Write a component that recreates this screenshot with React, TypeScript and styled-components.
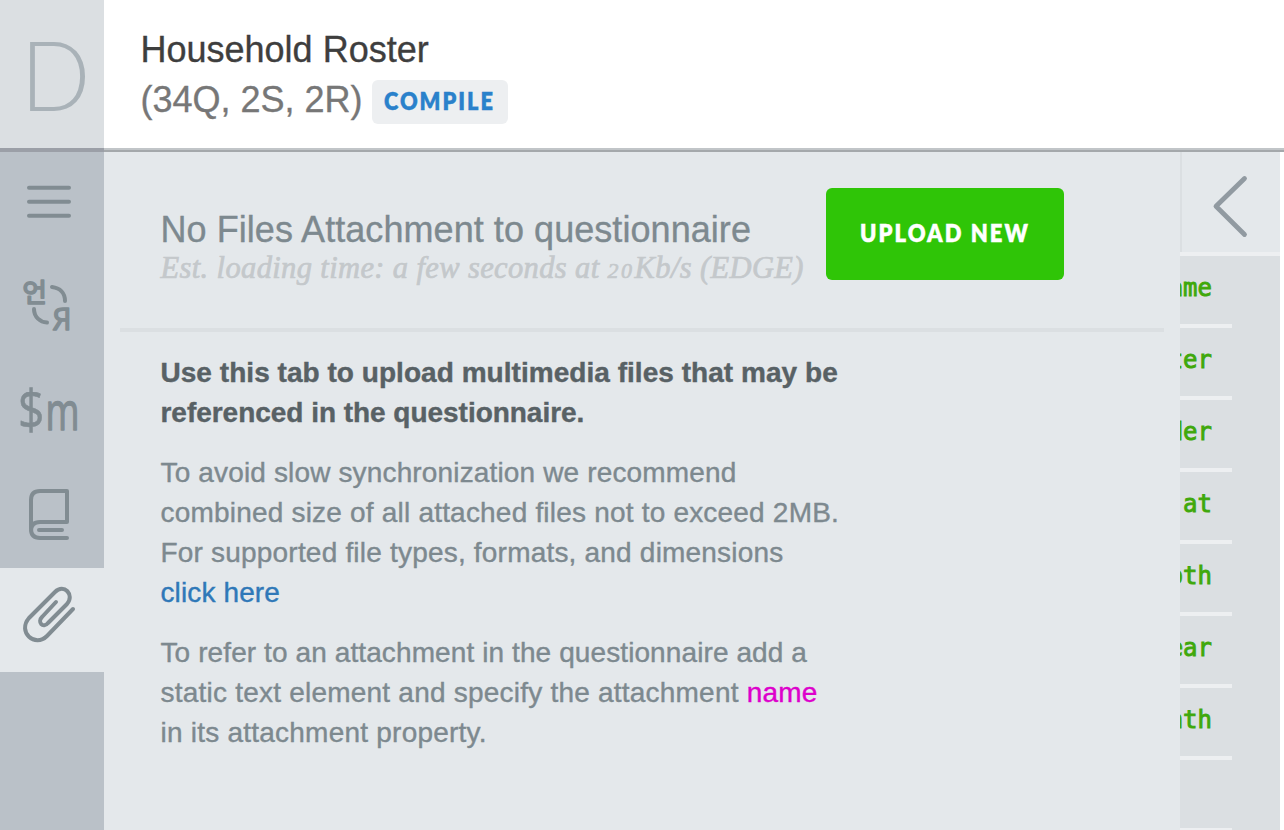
import React from "react";
import styled, { createGlobalStyle } from "styled-components";

const GlobalStyle = createGlobalStyle`
  * { box-sizing: border-box; }
  body {
    margin: 0;
    background: #fff;
    font-family: "Liberation Sans", Arial, sans-serif;
    overflow: hidden;
  }
`;

const Page = styled.div`
  display: flex;
  width: 1284px;
  height: 830px;
  overflow: hidden;
`;

const Sidebar = styled.nav`
  display: flex;
  flex-direction: column;
  width: 104px;
  background: #bac1c8;
`;

const Logo = styled.div`
  height: 152px;
  background: #dbdfe2;
  border-bottom: 4px solid #9b9fa7;
  svg { display: block; }
`;

const Tab = styled.button<{ $active?: boolean }>`
  display: block;
  width: 104px;
  height: 104px;
  padding: 0;
  border: 0;
  background: ${(p) => (p.$active ? "#e4e8eb" : "transparent")};
  svg { display: block; }
`;

const Icon = styled.svg`
  fill: none;
  stroke: #818c92;
  stroke-width: 4;
  stroke-linecap: round;
  stroke-linejoin: round;
  text { fill: #818c92; }
`;

const Main = styled.div`
  display: flex;
  flex-direction: column;
  flex: 1;
`;

const Header = styled.header`
  flex: none;
  height: 152px;
  padding: 25px 36px 0 36.5px;
  background: #fff;
  border-bottom: 2px solid #a4a8ab;
  box-shadow: inset 0 -2px #c1c5c8;
  font-size: 36px;
  line-height: 50px;
  color: #3e3e3e;
  -webkit-text-stroke: 0.35px;
`;

const TitleRow = styled.div`
  display: flex;
  align-items: center;
  gap: 9.5px;
  color: #777;
`;

const Caps = styled.span<{ $stretch: number }>`
  display: inline-block;
  font-family: Lato, sans-serif;
  font-weight: 800;
  font-size: 25px;
  line-height: 30px;
  letter-spacing: 2.3px;
  white-space: nowrap;
  transform: scaleX(${(p) => p.$stretch});
  transform-origin: left;
`;

const Compile = styled.button`
  width: 136px;
  height: 44px;
  margin-top: 3px;
  padding: 0 0 3px 12px;
  border: 0;
  border-radius: 6px;
  background: #edeff1;
  color: #2a81cb;
  text-align: left;
  line-height: 0;
  -webkit-text-stroke: 0.4px;
`;

const Body = styled.div`
  display: flex;
  flex: 1;
  min-height: 0;
`;

const Content = styled.main`
  width: 1076px;
  padding: 0 16px;
  background: #e4e8eb;
`;

const Intro = styled.section`
  display: flex;
  gap: 20px;
  height: 180px;
  padding: 36px 0 0 40px;
  border-bottom: 4px solid #dbdfe2;
`;

const IntroText = styled.div`
  width: 646px;
  padding: 22px 0 0 0.5px;
  white-space: nowrap;
`;

const Heading = styled.h1`
  margin: 0;
  font-size: 36px;
  line-height: 40px;
  font-weight: 400;
  letter-spacing: 0.06px;
  color: #7d898f;
  -webkit-text-stroke: 0.35px;
`;

const Estimate = styled.p`
  margin: 0;
  font-family: "Liberation Serif", Georgia, serif;
  font-style: italic;
  font-size: 30.5px;
  line-height: 36px;
  letter-spacing: 0.37px;
  color: #c4c8cb;
  -webkit-text-stroke: 0.7px;
`;

const SmallDigits = styled.span`
  font-size: 22px;
  letter-spacing: 2.5px;
`;

const Upload = styled.button`
  width: 238px;
  height: 92px;
  padding: 0 0 4px 34px;
  border: 0;
  border-radius: 6px;
  background: #2fc507;
  color: #fff;
  text-align: left;
  -webkit-text-stroke: 0.4px;
`;

const Help = styled.section`
  padding: 20.5px 0 0 40.5px;
  font-size: 28px;
  line-height: 40px;
  color: #7d898f;
  white-space: nowrap;
  -webkit-text-stroke: 0.4px;
`;

const Paragraph = styled.p<{ $strong?: boolean }>`
  margin: 0 0 20px;
  font-weight: ${(p) => (p.$strong ? 700 : 400)};
  color: ${(p) => (p.$strong ? "#586165" : "inherit")};
`;

const Line = styled.span<{ $track?: number }>`
  display: block;
  letter-spacing: ${(p) => p.$track ?? 0}px;
`;

const Link = styled.a`
  color: #2f78b8;
`;

const Name = styled.span`
  color: #dd00cb;
`;

const Variables = styled.aside`
  width: 100px;
  background: #dbdfe2;
  overflow: hidden;
`;

const Collapse = styled.button`
  display: block;
  width: 100px;
  height: 104px;
  padding: 0;
  border: 0;
  border-bottom: 4px solid #edeff1;
  background: #e4e8eb;
  box-shadow: inset 2px 0 #dbdfe2;
  svg { display: block; }
`;

const Variable = styled.div`
  display: flex;
  justify-content: flex-end;
  width: 52px;
  height: 72px;
  padding: 14px 20px 0 0;
  border-bottom: 4px solid #edeff1;
  overflow: hidden;
  font-family: "DejaVu Sans Mono", monospace;
  font-size: 24px;
  line-height: 36px;
  color: #3fa80b;
  -webkit-text-stroke: 0.9px #3fa80b;
`;

const variables = ["ame", "ter", "der", "at", "oth", "ear", "nth", ""];

export default function App() {
  return (
    <Page>
      <GlobalStyle />
      <Sidebar>
        <Logo>
          <svg width="104" height="148" viewBox="0 0 104 148">
            <text x="20.5" y="111" fontFamily="Lato" fontWeight="300" fontSize="97" fill="#a9b2b8" textLength="70" lengthAdjust="spacingAndGlyphs">D</text>
          </svg>
        </Logo>
        <Tab aria-label="Chapters">
          <Icon width="104" height="104" viewBox="0 152 104 104">
            <path d="M29 187.7H69M29 201.7H69M29 215.7H69" />
          </Icon>
        </Tab>
        <Tab aria-label="Translations">
          <Icon width="104" height="104" viewBox="0 256 104 104">
            <text x="22.5" y="302" fontFamily="Noto Sans CJK KR" fontSize="26.5" strokeWidth="1.8">언</text>
            <text x="52.5" y="330" fontFamily="Open Sans" fontSize="31" strokeWidth="1.6" textLength="19" lengthAdjust="spacingAndGlyphs">Я</text>
            <path d="M52 287C60 288 65 293 65 301M34 309C34 317 40 322 47 322.5" />
          </Icon>
        </Tab>
        <Tab aria-label="Macros">
          <Icon width="104" height="104" viewBox="0 360 104 104">
            <text x="18" y="429" fontFamily="Open Sans" fontSize="54" strokeWidth="0.6" textLength="26.5" lengthAdjust="spacingAndGlyphs">$</text>
            <text x="45.5" y="429.5" fontFamily="Open Sans" fontSize="53" strokeWidth="1.4" textLength="34" lengthAdjust="spacingAndGlyphs">m</text>
          </Icon>
        </Tab>
        <Tab aria-label="Lookup tables">
          <Icon width="104" height="104" viewBox="0 464 104 104">
            <path d="M67 522V491H40Q31 491 31 500V529Q31 538 40 538H67M31 531Q31 522 40 522H67M39 530H62" />
          </Icon>
        </Tab>
        <Tab $active aria-label="Attachments">
          <Icon width="104" height="104" viewBox="0 568 104 104">
            <path d="M56 602L42 617C37 622 43 629 48 623L67 604C75 595 64 583 55 592L29 618C17 632 35 648 47 636L73 609" />
          </Icon>
        </Tab>
      </Sidebar>
      <Main>
        <Header>
          <div>Household Roster</div>
          <TitleRow>
            <span>(34Q, 2S, 2R)</span>
            <Compile><Caps $stretch={0.87}>COMPILE</Caps></Compile>
          </TitleRow>
        </Header>
        <Body>
          <Content>
            <Intro>
              <IntroText>
                <Heading>No Files Attachment to questionnaire</Heading>
                <Estimate>
                  Est. loading time: a few seconds at <SmallDigits>20</SmallDigits>Kb/s (EDGE)
                </Estimate>
              </IntroText>
              <Upload><Caps $stretch={0.88}>UPLOAD NEW</Caps></Upload>
            </Intro>
            <Help>
              <Paragraph $strong>
                <Line $track={0.04}>Use this tab to upload multimedia files that may be</Line>
                <Line $track={-0.03}>referenced in the questionnaire.</Line>
              </Paragraph>
              <Paragraph>
                <Line $track={0.15}>To avoid slow synchronization we recommend</Line>
                <Line $track={0.2}>combined size of all attached files not to exceed 2MB.</Line>
                <Line $track={0.2}>For supported file types, formats, and dimensions</Line>
                <Line $track={0.12}><Link>click here</Link></Line>
              </Paragraph>
              <Paragraph>
                <Line $track={0.1}>To refer to an attachment in the questionnaire add a</Line>
                <Line $track={0.22}>static text element and specify the attachment <Name>name</Name></Line>
                <Line $track={0.23}>in its attachment property.</Line>
              </Paragraph>
            </Help>
          </Content>
          <Variables>
            <Collapse aria-label="Expand panel">
              <svg width="100" height="100" viewBox="1180 152 100 100" fill="none" stroke="#919aa1" strokeWidth="4.8" strokeLinecap="round">
                <path d="M1244.5 178.5L1216 206.3L1244.5 234.5" strokeLinejoin="round" />
              </svg>
            </Collapse>
            {variables.map((name, i) => (
              <Variable key={i}>{name}</Variable>
            ))}
          </Variables>
        </Body>
      </Main>
    </Page>
  );
}
